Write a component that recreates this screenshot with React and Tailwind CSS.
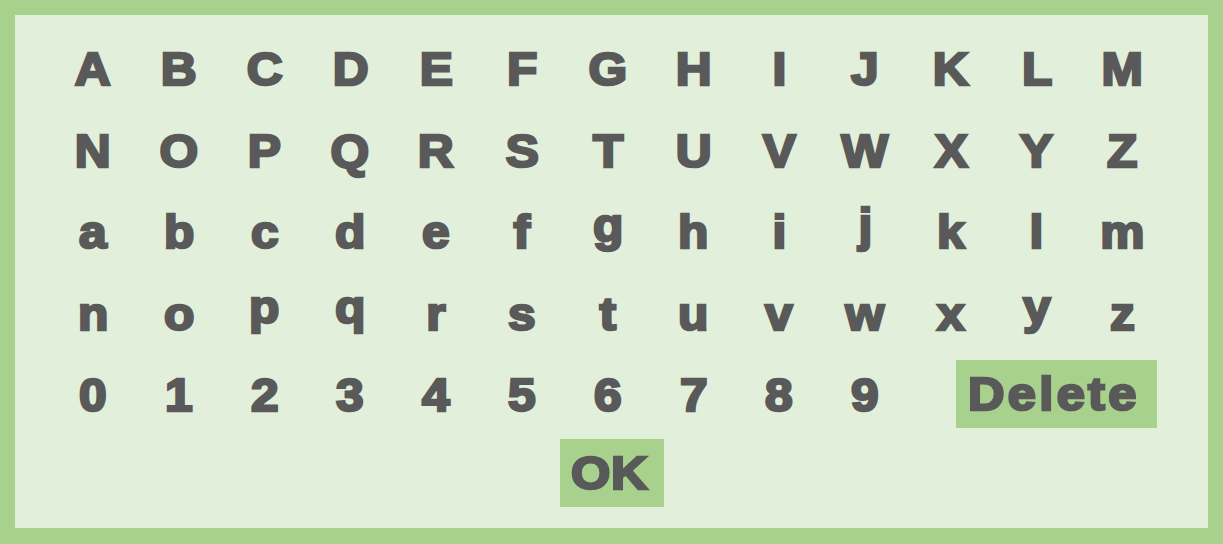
import React from "react";

const rows = [
  "ABCDEFGHIJKLM".split(""),
  "NOPQRSTUVWXYZ".split(""),
  "abcdefghijklm".split(""),
  "nopqrstuvwxyz".split(""),
];
const digits = "0123456789".split("");
const desc = new Set(["g", "j", "p", "q", "y"]);

const glyph =
  "font-['Liberation_Sans',Arial,sans-serif] font-bold text-[46px] text-[#595959] [-webkit-text-stroke:2.5px_#595959]";

function Key({ ch }) {
  return (
    <div className="flex h-[81.5px] justify-center leading-[81.5px]">
      <span
        className={
          "inline-block scale-x-[1.08] " + glyph + (desc.has(ch) ? " relative top-[-7px]" : "")
        }
      >
        {ch}
      </span>
    </div>
  );
}

export default function App() {
  return (
    <div className="w-[1223px] h-[544px] bg-[#a9d18e] pt-[15px] pl-[15px] pr-[15px] pb-[16px]">
      <div className="w-full h-full bg-[#e2efda] pt-[14.3px]">
        <div className="pl-[35px] grid grid-cols-[repeat(13,85.8px)]">
          {rows.flat().map((ch, i) => (
            <Key key={i} ch={ch} />
          ))}
          {digits.map((ch) => (
            <Key key={"d" + ch} ch={ch} />
          ))}
          <div className="col-span-3 h-[81.5px] pt-[4.7px] pl-[48px]">
            <div className={"w-[201px] h-[68px] bg-[#a9d18e] pl-[12px] leading-[68px] " + glyph}>
              <span className="inline-block origin-left scale-x-[1.1] tracking-[3px]">Delete</span>
            </div>
          </div>
        </div>
        <div className="flex justify-center pt-[2.2px]">
          <div className={"w-[104px] h-[68px] bg-[#a9d18e] pl-[11px] leading-[68px] " + glyph}>
            <span className="inline-block origin-left scale-x-[1.1] tracking-[0.5px]">OK</span>
          </div>
        </div>
      </div>
    </div>
  );
}
